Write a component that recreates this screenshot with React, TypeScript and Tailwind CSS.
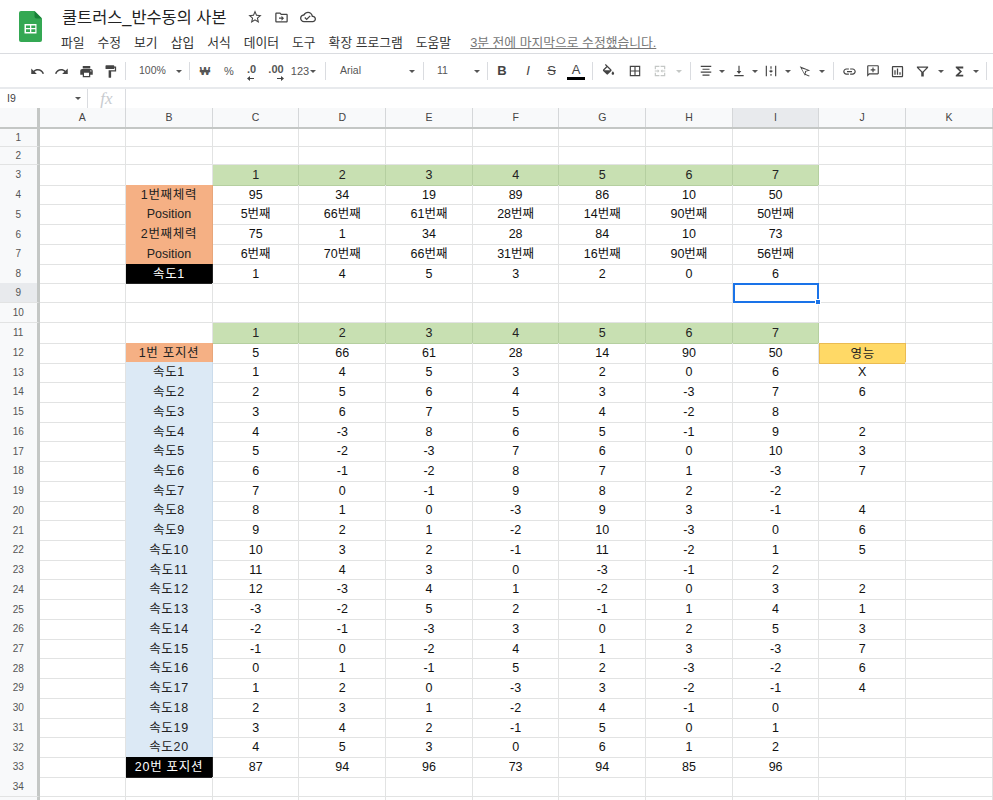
const FONT = "font-['Liberation_Sans','Noto_Sans_CJK_KR',sans-serif]";

const ICONS: Record<string, string> = {
  undo: 'M12.5 8c-2.65 0-5.05.99-6.9 2.6L2 7v9h9l-3.62-3.62c1.39-1.16 3.16-1.88 5.12-1.88 3.54 0 6.55 2.31 7.6 5.5l2.37-.78C21.08 11.03 17.15 8 12.5 8z',
  redo: 'M18.4 10.6C16.55 8.99 14.15 8 11.5 8c-4.65 0-8.58 3.03-9.96 7.22L3.9 16c1.05-3.19 4.05-5.5 7.6-5.5 1.95 0 3.73.72 5.12 1.88L13 16h9V7l-3.6 3.6z',
  print: 'M19 8H5c-1.66 0-3 1.34-3 3v6h4v4h12v-4h4v-6c0-1.66-1.34-3-3-3zm-3 11H8v-5h8v5zm3-7c-.55 0-1-.45-1-1s.45-1 1-1 1 .45 1 1-.45 1-1 1zm-1-9H6v4h12V3z',
  paint: 'M18 4V3c0-.55-.45-1-1-1H5c-.55 0-1 .45-1 1v4c0 .55.45 1 1 1h12c.55 0 1-.45 1-1V6h1v4H9v11c0 .55.45 1 1 1h2c.55 0 1-.45 1-1v-9h8V4h-3z',
  star: 'M22 9.24l-7.19-.62L12 2 9.19 8.63 2 9.24l5.46 4.73L5.82 21 12 17.27 18.18 21l-1.63-7.03L22 9.24zM12 15.4l-3.76 2.27 1-4.28-3.32-2.88 4.38-.38L12 6.1l1.71 4.04 4.38.38-3.32 2.88 1 4.28L12 15.4z',
  folder: 'M20 6h-8l-2-2H4c-1.1 0-2 .9-2 2v12c0 1.1.9 2 2 2h16c1.1 0 2-.9 2-2V8c0-1.1-.9-2-2-2zm0 12H4V6h5.17l2 2H20v10zm-8-1l4-4-4-4v3H8v2h4v3z',
  cloud: 'M19.35 10.04C18.67 6.59 15.64 4 12 4 9.11 4 6.6 5.64 5.35 8.04 2.34 8.36 0 10.91 0 14c0 3.31 2.69 6 6 6h13c2.76 0 5-2.24 5-5 0-2.64-2.05-4.78-4.65-4.96zM19 18H6c-2.21 0-4-1.79-4-4 0-2.05 1.53-3.76 3.56-3.97l1.07-.11.5-.95C8.08 7.14 9.94 6 12 6c2.62 0 4.88 1.86 5.39 4.43l.3 1.5 1.53.11c1.56.1 2.78 1.41 2.78 2.96 0 1.65-1.35 3-3 3zm-9-3.82l-2.09-2.09L6.5 13.5 10 17l6.01-6.01-1.41-1.41z',
  fill: 'M16.56 8.94L7.62 0 6.21 1.41l2.38 2.38-5.15 5.15c-.59.59-.59 1.54 0 2.12l5.5 5.5c.29.29.68.44 1.06.44s.77-.15 1.06-.44l5.5-5.5c.59-.58.59-1.53 0-2.12zM5.21 10L10 5.21 14.79 10H5.21zM19 11.5s-2 2.17-2 3.5c0 1.1.9 2 2 2s2-.9 2-2c0-1.33-2-3.5-2-3.5z',
  borders: 'M3 3v18h18V3H3zm8 16H5v-6h6v6zm0-8H5V5h6v6zm8 8h-6v-6h6v6zm0-8h-6V5h6v6z',
  merge: 'M3 3h8v2H5v4H3V3zm10 0h8v6h-2V5h-6V3zM3 15h2v4h6v2H3v-6zm16 0h2v6h-8v-2h6v-4zM3 11h5V9l3 3-3 3v-2H3v-2zm18 0v2h-5v2l-3-3 3-3v2h5z',
  halign: 'M3 3h18v2H3V3zm3 5h12v2H6V8zm-3 5h18v2H3v-2zm3 5h12v2H6v-2z',
  valign: 'M4 19h16v2H4v-2zM11 3h2v9h3l-4 5-4-5h3V3z',
  wrap: 'M3 3h2v18H3V3zm16 0h2v18h-2V3zM11 4h2v4h-2V4zm0 6h2v1.5h3L12 15l-4-3.5h3V10zm0 7h2v3h-2v-3z',
  rotate: 'M3 4l18 7-7 2-2 7L3 4zm3.5 3.5l4.7 9 1.2-4.5 4.5-1.2-10.4-3.3zM13 17l7 3-1 1.5-7-3z',
  link: 'M3.9 12c0-1.71 1.39-3.1 3.1-3.1h4V7H7c-2.76 0-5 2.24-5 5s2.24 5 5 5h4v-1.9H7c-1.71 0-3.1-1.39-3.1-3.1zM8 13h8v-2H8v2zm9-6h-4v1.9h4c1.71 0 3.1 1.39 3.1 3.1s-1.39 3.1-3.1 3.1h-4V17h4c2.76 0 5-2.24 5-5s-2.24-5-5-5z',
  comment: 'M20 2H4c-1.1 0-2 .9-2 2v18l4-4h14c1.1 0 2-.9 2-2V4c0-1.1-.9-2-2-2zm0 14H5.2L4 17.2V4h16v12zM11 6h2v3h3v2h-3v3h-2v-3H8V9h3V6z',
  chart: 'M19 3H5c-1.1 0-2 .9-2 2v14c0 1.1.9 2 2 2h14c1.1 0 2-.9 2-2V5c0-1.1-.9-2-2-2zm0 16H5V5h14v14zM7 10h2v7H7v-7zm4-3h2v10h-2V7zm4 6h2v4h-2v-4z',
  filter: 'M3 4h18v2l-7 7v7h-4v-7L3 6V4zm2.8 2l6.2 6.2L18.2 6H5.8z',
  sigma: 'M18 4H6v2l6.5 6L6 18v2h12v-3h-7l5-5-5-5h7V4z',
};

function Icon({ name, size = 15, className = 'text-[#444]' }: { name: string; size?: number; className?: string }) {
  return (
    <svg width={size} height={size} viewBox="0 0 24 24" fill="currentColor" className={className}>
      <path d={ICONS[name]} />
    </svg>
  );
}

function Caret({ light = false }: { light?: boolean }) {
  return (
    <span className={`block shrink-0 w-0 h-0 border-x-[3.5px] border-x-transparent border-t-[3.5px] ${light ? 'border-t-[#c4c7c5]' : 'border-t-[#555]'}`} />
  );
}

function Sep() {
  return <div className="w-px h-[18px] bg-[#dadce0] shrink-0" />;
}

function Slot({ w, children }: { w: number; children: React.ReactNode }) {
  return (
    <div className="flex items-center justify-center shrink-0 h-full" style={{ width: w }}>
      {children}
    </div>
  );
}

// .0 and .00 buttons: digits with a small arrow under them
function Decimal({ label, right = false }: { label: string; right?: boolean }) {
  return (
    <span className={`flex flex-col gap-px pt-[2px] ${right ? 'items-end' : 'items-start pl-[3px]'}`}>
      <span className="text-[11px] leading-[11px] font-bold text-[#555]">{label}</span>
      <svg width="7" height="5" viewBox="0 0 7 5" className="text-[#444]">
        <path d={right ? 'M0 2h4V0l3 2.5L4 5V3H0z' : 'M7 2H3V0L0 2.5 3 5V3h4z'} fill="currentColor" />
      </svg>
    </span>
  );
}

function SheetsLogo() {
  return (
    <svg width="23" height="31" viewBox="0 0 23 31">
      <path d="M2 0h13.5L23 7.5V29a2 2 0 0 1-2 2H2a2 2 0 0 1-2-2V2a2 2 0 0 1 2-2z" fill="#34a853" />
      <path d="M15.5 0L23 7.5h-5.5a2 2 0 0 1-2-2z" fill="#188038" />
      <path d="M5.5 13h12v9.5h-12z" fill="#fff" />
      <path d="M7 14.5h4v2.5H7zM12.3 14.5h4v2.5h-4zM7 18.3h4v2.7H7zM12.3 18.3h4v2.7h-4z" fill="#34a853" />
    </svg>
  );
}

const MENUS = ['파일', '수정', '보기', '삽입', '서식', '데이터', '도구', '확장 프로그램', '도움말'];

function TopBar() {
  return (
    <div className="flex h-[54px] border-b border-[#dadce0]">
      <div className="w-[61px] pl-[19px] pt-[11px] shrink-0">
        <SheetsLogo />
      </div>
      <div className="flex flex-col flex-1">
        <div className="flex items-center h-[20px] mt-[7px]">
          <span className="text-[16.4px] leading-5 text-[#222] w-[186px] whitespace-nowrap pl-px">쿨트러스_반수동의 사본</span>
          <div className="flex items-center gap-[11px] text-[#5f6368]">
            <Icon name="star" size={16} />
            <Icon name="folder" size={15} />
            <Icon name="cloud" size={16} />
          </div>
        </div>
        <div className="flex items-center gap-[13px] h-[18px] mt-[7px] text-[12.8px] text-[#333] whitespace-nowrap">
          {MENUS.map(m => (
            <span key={m}>{m}</span>
          ))}
          <span className="ml-[6px] text-[#777] underline">3분 전에 마지막으로 수정했습니다.</span>
        </div>
      </div>
    </div>
  );
}

function Toolbar() {
  return (
    <div className="flex items-center h-[35px] pl-[25px] pt-px border-b-[2px] border-[#e8eaed] text-[#555]">
      <Slot w={24}><Icon name="undo" /></Slot>
      <Slot w={25}><Icon name="redo" /></Slot>
      <Slot w={24}><Icon name="print" /></Slot>
      <Slot w={24}><Icon name="paint" /></Slot>
      <Slot w={7}><Sep /></Slot>
      <div className="flex items-center h-full w-[60px] shrink-0 pl-[10px]">
        <span className="text-[10.5px] mr-[10px]">100%</span>
        <Caret />
      </div>
      <Slot w={1}><Sep /></Slot>
      <Slot w={30}><span className="text-[11px] font-bold">₩</span></Slot>
      <Slot w={18}><span className="text-[11px]">%</span></Slot>
      <Slot w={24}><Decimal label=".0" /></Slot>
      <Slot w={28}><Decimal label=".00" right /></Slot>
      <Slot w={20}><span className="text-[11px]">123</span></Slot>
      <Slot w={6}><Caret /></Slot>
      <Slot w={18}><Sep /></Slot>
      <div className="flex items-center h-full w-[89px] shrink-0 pl-[6px] pr-[8px] justify-between">
        <span className="text-[10.5px]">Arial</span>
        <Caret />
      </div>
      <Slot w={1}><Sep /></Slot>
      <div className="flex items-center h-full w-[63px] shrink-0 pl-[13px] pr-[7px] justify-between">
        <span className="text-[10.5px]">11</span>
        <Caret />
      </div>
      <Slot w={1}><Sep /></Slot>
      <Slot w={28}><span className="text-[13px] font-bold text-[#444]">B</span></Slot>
      <Slot w={24}><span className="text-[13px] italic text-[#444]">I</span></Slot>
      <Slot w={23}><span className="text-[13px] line-through text-[#444]">S</span></Slot>
      <Slot w={26}>
        <span className="flex flex-col items-center">
          <span className="text-[13px] leading-[14px] text-[#444]">A</span>
          <span className="block w-[18px] h-[3px] bg-black" />
        </span>
      </Slot>
      <Slot w={7}><Sep /></Slot>
      <Slot w={25}><Icon name="fill" /></Slot>
      <Slot w={27}><Icon name="borders" size={14} /></Slot>
      <Slot w={24}><Icon name="merge" size={14} className="text-[#c4c7c5]" /></Slot>
      <Slot w={14}><Caret light /></Slot>
      <Slot w={8}><Sep /></Slot>
      <Slot w={24}><Icon name="halign" size={14} /></Slot>
      <Slot w={8}><Caret /></Slot>
      <Slot w={26}><Icon name="valign" size={14} /></Slot>
      <Slot w={6}><Caret /></Slot>
      <Slot w={26}><Icon name="wrap" size={14} /></Slot>
      <Slot w={8}><Caret /></Slot>
      <Slot w={26}><Icon name="rotate" size={14} /></Slot>
      <Slot w={7}><Caret /></Slot>
      <Slot w={16}><Sep /></Slot>
      <Slot w={16}><Icon name="link" /></Slot>
      <Slot w={32}><Icon name="comment" size={14} /></Slot>
      <Slot w={16}><Icon name="chart" /></Slot>
      <Slot w={34}><Icon name="filter" size={15} /></Slot>
      <Slot w={4}><Caret /></Slot>
      <Slot w={32}><Icon name="sigma" size={15} /></Slot>
      <Slot w={1}><Caret /></Slot>
      <Slot w={20}><Sep /></Slot>
    </div>
  );
}

function FormulaBar() {
  return (
    <div className="flex items-center h-[19px] text-[#444]">
      <div className="flex items-center justify-between w-[88px] pl-[7px] pr-[6px] h-full border-r border-[#dadce0] shrink-0">
        <span className="text-[10.5px]">I9</span>
        <Caret />
      </div>
      <div className="flex items-center justify-center w-[38px] h-full border-r border-[#dadce0] shrink-0">
        <span className="font-['Liberation_Serif',serif] italic text-[17px] text-[#c8cbcf]">fx</span>
      </div>
    </div>
  );
}

const COLS = ['A', 'B', 'C', 'D', 'E', 'F', 'G', 'H', 'I', 'J', 'K'];

type Kind = 'plain' | 'green' | 'orange' | 'black' | 'blue' | 'yellow' | 'selected';

const KIND_CLASS: Record<Kind, string> = {
  plain: 'border-r border-b border-[#e2e3e3] text-[#111]',
  green: 'border-r border-b border-[#b5cfa0] bg-[#c8e0b2] text-[#222]',
  orange: 'border-r border-b border-[#e8a67a] bg-[#f5b084] text-[#222]',
  black: 'border-r border-b border-[#222] bg-black text-white',
  blue: 'border-r border-b border-[#cbdcec] bg-[#dce9f5] text-[#222]',
  yellow: 'border border-[#eabb52] bg-[#ffd966] text-[#222]',
  selected: 'border-2 border-[#1a73e8] relative',
};

function Cell({ kind = 'plain', label = false, children }: { kind?: Kind; label?: boolean; children?: React.ReactNode }) {
  return (
    <div className={`flex items-center justify-center pt-px whitespace-nowrap text-[12.5px] ${label ? 'tracking-[0.7px]' : ''} ${KIND_CLASS[kind]}`}>
      {children}
      {kind === 'selected' && (
        <span className="absolute -right-[4px] -bottom-[4px] w-[6px] h-[6px] bg-[#1a73e8] border border-white" />
      )}
    </div>
  );
}

const GRID = 'grid grid-cols-[39.5px_repeat(11,86.67px)]';

function HeaderRow() {
  return (
    <div className={`${GRID} h-[21px] border-b-[2px] border-[#c4c7c5] bg-[#f8f9fa] text-[10.5px] text-[#444]`}>
      <div className="border-r-[3px] border-[#c4c7c5] bg-[#f8f9fa]" />
      {COLS.map(c => (
        <div key={c} className={`flex items-center justify-center border-r border-[#d5d7d9] ${c === 'I' ? 'bg-[#e8eaed]' : ''}`}>
          {c}
        </div>
      ))}
    </div>
  );
}

interface Row {
  label?: string;
  kind?: Kind;
  values?: (string | number)[];
  valueKind?: Kind;
  j?: string | number;
  jKind?: Kind;
}

const SPEEDS: [number[], (string | number)?][] = [
  [[1, 4, 5, 3, 2, 0, 6], 'X'],
  [[2, 5, 6, 4, 3, -3, 7], 6],
  [[3, 6, 7, 5, 4, -2, 8]],
  [[4, -3, 8, 6, 5, -1, 9], 2],
  [[5, -2, -3, 7, 6, 0, 10], 3],
  [[6, -1, -2, 8, 7, 1, -3], 7],
  [[7, 0, -1, 9, 8, 2, -2]],
  [[8, 1, 0, -3, 9, 3, -1], 4],
  [[9, 2, 1, -2, 10, -3, 0], 6],
  [[10, 3, 2, -1, 11, -2, 1], 5],
  [[11, 4, 3, 0, -3, -1, 2]],
  [[12, -3, 4, 1, -2, 0, 3], 2],
  [[-3, -2, 5, 2, -1, 1, 4], 1],
  [[-2, -1, -3, 3, 0, 2, 5], 3],
  [[-1, 0, -2, 4, 1, 3, -3], 7],
  [[0, 1, -1, 5, 2, -3, -2], 6],
  [[1, 2, 0, -3, 3, -2, -1], 4],
  [[2, 3, 1, -2, 4, -1, 0]],
  [[3, 4, 2, -1, 5, 0, 1]],
  [[4, 5, 3, 0, 6, 1, 2]],
];

const HEAD = [1, 2, 3, 4, 5, 6, 7];

const ROWS: Row[] = [
  {},
  {},
  { values: HEAD, valueKind: 'green' },
  { label: '1번째체력', kind: 'orange', values: [95, 34, 19, 89, 86, 10, 50] },
  { label: 'Position', kind: 'orange', values: ['5번째', '66번째', '61번째', '28번째', '14번째', '90번째', '50번째'] },
  { label: '2번째체력', kind: 'orange', values: [75, 1, 34, 28, 84, 10, 73] },
  { label: 'Position', kind: 'orange', values: ['6번째', '70번째', '66번째', '31번째', '16번째', '90번째', '56번째'] },
  { label: '속도1', kind: 'black', values: [1, 4, 5, 3, 2, 0, 6] },
  {},
  {},
  { values: HEAD, valueKind: 'green' },
  { label: '1번 포지션', kind: 'orange', values: [5, 66, 61, 28, 14, 90, 50], j: '영능', jKind: 'yellow' },
  ...SPEEDS.map(([values, j], i): Row => ({ label: `속도${i + 1}`, kind: 'blue', values, j })),
  { label: '20번 포지션', kind: 'black', values: [87, 94, 96, 73, 94, 85, 96] },
  {},
  {},
];

function SheetRow({ row, n }: { row: Row; n: number }) {
  const height = n <= 2 ? 'h-[18px]' : 'h-[19.74px]';
  return (
    <div className={`${GRID} ${height}`}>
      <div className={`flex items-center justify-center border-r-[3px] border-r-[#c4c7c5] border-b border-b-[#e2e3e3] text-[10px] text-[#555] ${n === 9 ? 'bg-[#e8eaed]' : 'bg-[#f8f9fa]'}`}>
        {n <= 34 ? n : null}
      </div>
      <Cell />
      <Cell kind={row.kind} label={row.label !== 'Position'}>{row.label}</Cell>
      {HEAD.map((_, i) => (
        <Cell key={i} kind={n === 9 && i === 6 ? 'selected' : row.valueKind}>
          {row.values?.[i]}
        </Cell>
      ))}
      <Cell kind={row.jKind} label={row.jKind === 'yellow'}>{row.j}</Cell>
      <Cell />
    </div>
  );
}

export default function App() {
  return (
    <div className={`${FONT} h-[800px] w-[993px] overflow-hidden bg-white`}>
      <TopBar />
      <Toolbar />
      <FormulaBar />
      <HeaderRow />
      {ROWS.map((row, i) => (
        <SheetRow key={i} row={row} n={i + 1} />
      ))}
    </div>
  );
}
